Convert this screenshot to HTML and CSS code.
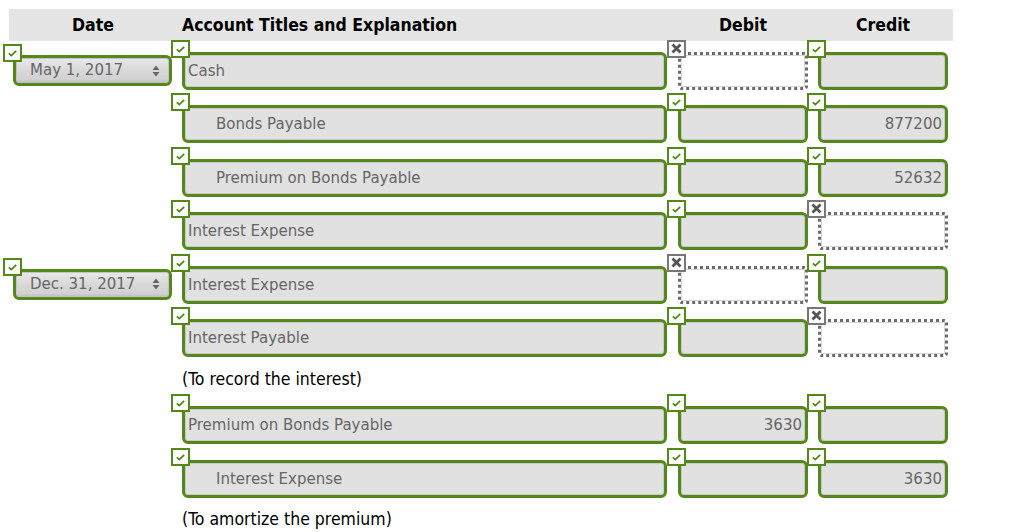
FILE: index.html
```html
<!DOCTYPE html>
<html>
<head>
<meta charset="utf-8">
<link rel="stylesheet" href="styles.css">
</head>
<body>
<div class="page">
  <div class="head">
    <div class="h-date">Date</div>
    <div class="h-acct">Account Titles and Explanation</div>
    <div class="h-num">Debit</div>
    <div class="h-num">Credit</div>
  </div>

  <div class="rows">
    <div class="row">
      <div class="cell date-cell"><span class="mark ok"></span><div class="select"><span>May 1, 2017</span><span class="arrows"></span></div></div>
      <div class="cell"><span class="mark ok"></span><div class="box acct">Cash</div></div>
      <div class="cell"><span class="mark bad"></span><div class="box empty"></div></div>
      <div class="cell"><span class="mark ok"></span><div class="box num"></div></div>
    </div>
    <div class="row">
      <div class="cell"></div>
      <div class="cell"><span class="mark ok"></span><div class="box acct indent">Bonds Payable</div></div>
      <div class="cell"><span class="mark ok"></span><div class="box num"></div></div>
      <div class="cell"><span class="mark ok"></span><div class="box num">877200</div></div>
    </div>
    <div class="row">
      <div class="cell"></div>
      <div class="cell"><span class="mark ok"></span><div class="box acct indent">Premium on Bonds Payable</div></div>
      <div class="cell"><span class="mark ok"></span><div class="box num"></div></div>
      <div class="cell"><span class="mark ok"></span><div class="box num">52632</div></div>
    </div>
    <div class="row">
      <div class="cell"></div>
      <div class="cell"><span class="mark ok"></span><div class="box acct">Interest Expense</div></div>
      <div class="cell"><span class="mark ok"></span><div class="box num"></div></div>
      <div class="cell"><span class="mark bad"></span><div class="box empty"></div></div>
    </div>
    <div class="row">
      <div class="cell date-cell"><span class="mark ok"></span><div class="select"><span>Dec. 31, 2017</span><span class="arrows"></span></div></div>
      <div class="cell"><span class="mark ok"></span><div class="box acct">Interest Expense</div></div>
      <div class="cell"><span class="mark bad"></span><div class="box empty"></div></div>
      <div class="cell"><span class="mark ok"></span><div class="box num"></div></div>
    </div>
    <div class="row">
      <div class="cell"></div>
      <div class="cell"><span class="mark ok"></span><div class="box acct">Interest Payable</div></div>
      <div class="cell"><span class="mark ok"></span><div class="box num"></div></div>
      <div class="cell"><span class="mark bad"></span><div class="box empty"></div></div>
    </div>
    <div class="note">(To record the interest)</div>
    <div class="row tall">
      <div class="cell"></div>
      <div class="cell"><span class="mark ok"></span><div class="box acct">Premium on Bonds Payable</div></div>
      <div class="cell"><span class="mark ok"></span><div class="box num">3630</div></div>
      <div class="cell"><span class="mark ok"></span><div class="box num"></div></div>
    </div>
    <div class="row tall">
      <div class="cell"></div>
      <div class="cell"><span class="mark ok"></span><div class="box acct indent">Interest Expense</div></div>
      <div class="cell"><span class="mark ok"></span><div class="box num"></div></div>
      <div class="cell"><span class="mark ok"></span><div class="box num">3630</div></div>
    </div>
    <div class="note last">(To amortize the premium)</div>
  </div>
</div>
</body>
</html>
```

FILE: styles.css
```css
html, body {
  margin: 0;
  padding: 0;
  background: #fff;
}
.page {
  width: 1024px;
  height: 532px;
  overflow: hidden;
  padding-top: 9px;
  box-sizing: border-box;
  font-family: "DejaVu Sans", Verdana, sans-serif;
}
.head {
  margin-left: 9px;
  width: 944px;
  height: 32px;
  background: #e5e5e5;
  display: grid;
  grid-template-columns: 168px 491px 150px 130px;
  align-items: center;
  font-family: "DejaVu Sans Condensed", "DejaVu Sans", sans-serif;
  font-weight: bold;
  font-size: 17.5px;
  color: #000;
}
.h-date { text-align: center; }
.h-acct { padding-left: 5px; }
.h-num { text-align: center; }

.rows {
  margin-top: -1px;
  padding-left: 3px;
}
.row {
  display: grid;
  grid-template-columns: 168px 496px 140px 140px;
  height: 53.4px;
}
.row.tall { height: 54px; }
.cell {
  position: relative;
  padding: 12px 0 0 11px;
  box-sizing: border-box;
}
.date-cell {
  padding: 15px 0 0 10px;
}
.date-cell .mark { top: 4px; }

.mark {
  position: absolute;
  left: 0;
  top: 0;
  width: 19px;
  height: 18px;
  box-sizing: border-box;
  background: #fff no-repeat center;
  z-index: 2;
}
.mark.ok {
  border: 2px solid #54881a;
  background-image: url("data:image/svg+xml;utf8,<svg xmlns='http://www.w3.org/2000/svg' width='15' height='14' viewBox='0 0 15 14'><path d='M3.8 7.4 L6.3 9.5 L11.2 4.8' fill='none' stroke='%234f8a10' stroke-width='1.7'/></svg>");
}
.mark.bad {
  border: 2px solid #777;
  background-image: url("data:image/svg+xml;utf8,<svg xmlns='http://www.w3.org/2000/svg' width='15' height='14' viewBox='0 0 15 14'><path d='M3.5 2.5 L11.5 10.5 M11.5 2.5 L3.5 10.5' fill='none' stroke='%23555' stroke-width='2.8'/></svg>");
}

.box {
  height: 38px;
  box-sizing: border-box;
  border: 3px solid #54881a;
  border-radius: 6px;
  background: #e1e1e1;
  box-shadow: inset 0 0 0 1px #c9c9c9;
  color: #666;
  font-size: 15px;
  line-height: 33px;
  white-space: nowrap;
  overflow: hidden;
}
.acct {
  width: 485px;
  padding-left: 3px;
}
.acct.indent { padding-left: 31px; }
.num {
  width: 130px;
  text-align: right;
  padding-right: 3px;
}
.empty {
  width: 130px;
  border: 3px dotted #6b6b6b;
  border-radius: 4px;
  background: #fff;
  box-shadow: inset 0 0 0 1px #d6d6d6;
}

.select {
  width: 159px;
  height: 31px;
  box-sizing: border-box;
  border: 3px solid #54881a;
  border-radius: 6px;
  background: linear-gradient(#e9e9e9, #d7d7d7 55%, #cfcfcf);
  box-shadow: inset 0 0 0 1px #c4c4c4, inset 0 -2px 2px rgba(0,0,0,0.08);
  color: #666;
  font-size: 15px;
  line-height: 25px;
  padding-left: 14px;
  display: flex;
  justify-content: space-between;
  align-items: center;
  padding-right: 9px;
}
.arrows {
  width: 8px;
  height: 12px;
  background: url("data:image/svg+xml;utf8,<svg xmlns='http://www.w3.org/2000/svg' width='8' height='12' viewBox='0 0 8 12'><path d='M4 0.5 L7.5 5 L0.5 5 Z M4 11.5 L7.5 7 L0.5 7 Z' fill='%23666'/></svg>") no-repeat center;
}

.note {
  margin-left: 179px;
  height: 33.6px;
  font-family: "DejaVu Sans Condensed", "DejaVu Sans", sans-serif;
  font-size: 17.5px;
  line-height: 38px;
  color: #000;
}
.note.last { line-height: 35px; }
```
